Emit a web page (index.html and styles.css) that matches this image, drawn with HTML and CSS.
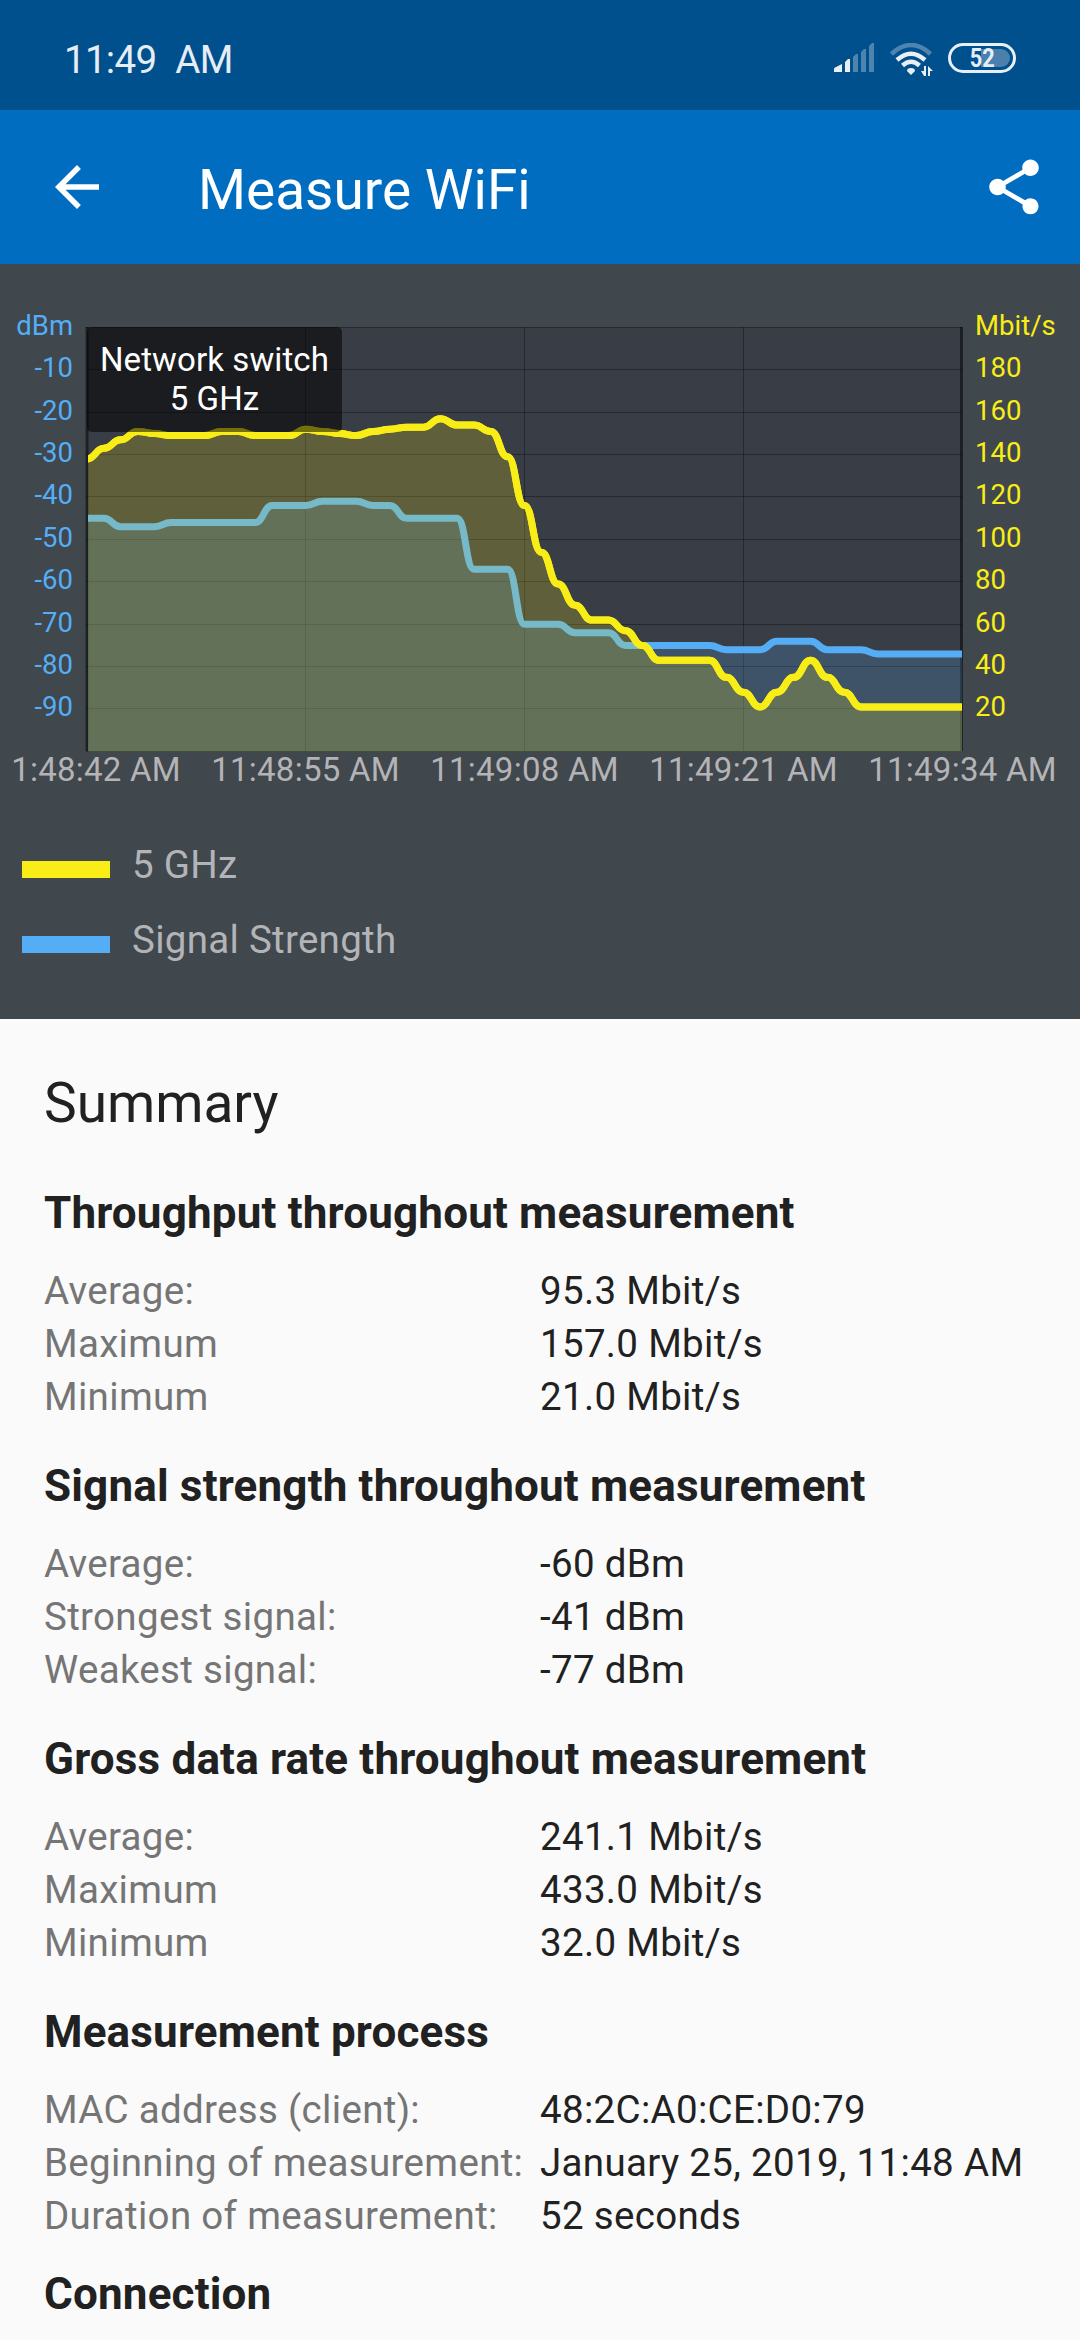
FILE: index.html
```
<!DOCTYPE html>
<html lang="en">
<head>
    <meta charset="UTF-8">
    <meta name="viewport" content="width=device-width, initial-scale=1.0">
    <title>Measure WiFi</title>
    <link rel="stylesheet" href="styles.css">
</head>
<body>
    <div class="status-bar">
        <span class="clock">11:49 AM</span>
        <div class="status-icons">
            <svg class="signal" viewBox="0 0 40 30" width="40" height="30">
                <path d="M0 29v-3q0-1 1-1.500L8 21v8z M11 29V19l3-3h2v13z"/>
                <path class="dim" d="M19 29V14l3-3h2v18z M27 29V9l3-3h2v23z M35 29V3l3-3h2v29z"/>
            </svg>
            <svg class="wifi" viewBox="0 0 44 34" width="44" height="34">
                <path class="arc dim-arc" d="M1.500 11Q21 -7 40.500 11"/>
                <path class="arc" d="M7 17Q21 4.500 35 17"/>
                <path class="arc" d="M12.500 22.500Q21 15 29.500 22.500"/>
                <path d="M17 28q0-3 4-3t4 3l-4 4z"/>
                <path d="M31 28h3v-5h2v10h-2zM38 23l5 5h-3v5h-2z"/>
            </svg>
            <div class="battery"><div class="battery-level"></div><span>52</span></div>
        </div>
    </div>

    <div class="app-bar">
        <svg viewBox="0 0 24 24" width="66" height="66">
            <path d="M20 11H7.830l5.590-5.590L12 4l-8 8 8 8 1.410-1.410L7.830 13H20v-2z"/>
        </svg>
        <h1>Measure WiFi</h1>
        <svg viewBox="0 0 24 24" width="66" height="66">
            <path d="M18 16.080c-.76 0-1.440.3-1.960.77L8.910 12.700c.05-.23.09-.46.09-.7s-.04-.47-.09-.7l7.050-4.110c.54.5 1.250.81 2.040.81 1.660 0 3-1.340 3-3s-1.340-3-3-3-3 1.340-3 3c0 .24.04.47.09.7L8.040 9.810C7.500 9.310 6.790 9 6 9c-1.660 0-3 1.340-3 3s1.340 3 3 3c.79 0 1.500-.31 2.040-.81l7.120 4.160c-.05.21-.08.43-.08.65 0 1.610 1.310 2.920 2.920 2.920s2.920-1.310 2.920-2.920-1.310-2.920-2.920-2.920z"/>
        </svg>
    </div>

    <div class="chart-panel">
        <svg id="chart" class="chart" viewBox="0 264 1080 540" width="1080" height="540"></svg>
        <div class="legend">
            <div class="legend-item"><i class="swatch yellow"></i>5 GHz</div>
            <div class="legend-item"><i class="swatch blue"></i>Signal Strength</div>
        </div>
    </div>

    <div class="summary">
        <h2>Summary</h2>

        <div class="section">
            <h3>Throughput throughout measurement</h3>
            <dl>
                <dt>Average:</dt><dd>95.3 Mbit/s</dd>
                <dt>Maximum</dt><dd>157.0 Mbit/s</dd>
                <dt>Minimum</dt><dd>21.0 Mbit/s</dd>
            </dl>
        </div>

        <div class="section">
            <h3>Signal strength throughout measurement</h3>
            <dl>
                <dt>Average:</dt><dd>-60 dBm</dd>
                <dt>Strongest signal:</dt><dd>-41 dBm</dd>
                <dt>Weakest signal:</dt><dd>-77 dBm</dd>
            </dl>
        </div>

        <div class="section">
            <h3>Gross data rate throughout measurement</h3>
            <dl>
                <dt>Average:</dt><dd>241.1 Mbit/s</dd>
                <dt>Maximum</dt><dd>433.0 Mbit/s</dd>
                <dt>Minimum</dt><dd>32.0 Mbit/s</dd>
            </dl>
        </div>

        <div class="section last">
            <h3>Measurement process</h3>
            <dl>
                <dt>MAC address (client):</dt><dd>48:2C:A0:CE:D0:79</dd>
                <dt>Beginning of measurement:</dt><dd>January 25, 2019, 11:48 AM</dd>
                <dt>Duration of measurement:</dt><dd>52 seconds</dd>
            </dl>
        </div>

        <h3>Connection</h3>
    </div>
    <script src="chart.js"></script>
</body>
</html>
```
FILE: styles.css
```
body {
    margin: 0;
    height: 2340px;
    overflow: hidden;
    font-family: Roboto, "Liberation Sans", sans-serif;
    font-size: 38.5px;
    color: #212121;
    background-color: #fafafa;
}
h1, h2, h3, dl, dd {
    margin: 0;
}

/* top bars */
.status-bar {
    display: flex;
    justify-content: space-between;
    box-sizing: border-box;
    height: 110px;
    padding: 0 64px;
    background-color: #00508e;
    color: #e6edf4;
}
.clock {
    margin-top: 37px;
    font-size: 38.5px;
    line-height: 46px;
    letter-spacing: -.7px;
    word-spacing: 10px;
}
.status-icons {
    display: flex;
    align-items: flex-start;
    padding-top: 43px;
}
.status-icons svg {
    fill: #e9eff5;
}
.wifi {
    margin: 0 14px 0 16px;
}
.status-icons .dim {
    fill: #4d84b0;
}
.wifi .arc {
    fill: none;
    stroke: #e9eff5;
    stroke-width: 4.5;
}
.wifi .dim-arc {
    stroke: #4d84b0;
}
.battery {
    position: relative;
    box-sizing: border-box;
    width: 68px;
    height: 30px;
    border: 3px solid #e9eff5;
    border-radius: 15px;
    font-size: 25px;
    font-weight: bold;
    line-height: 25px;
    text-align: center;
}
.battery span {
    position: relative;
    display: inline-block;
    transform: scaleX(.87);
}
.battery-level {
    position: absolute;
    top: 3px;
    right: 3px;
    width: 29px;
    height: 18px;
    border-radius: 0 9px 9px 0;
    background-color: #4a80ad;
}
.app-bar {
    display: flex;
    align-items: center;
    box-sizing: border-box;
    height: 154px;
    padding: 0 33px 0 44px;
    background-color: #006dc1;
    color: #fff;
}
.app-bar svg {
    fill: #fff;
}
.app-bar h1 {
    flex: 1;
    padding: 5px 0 0 88px;
    font-size: 55px;
    font-weight: normal;
}

/* chart */
.chart-panel {
    height: 755px;
    background-color: #40474d;
}
.chart {
    display: block;
}
.plot-bg { fill: #393d45; }
.grid { stroke: #000; stroke-opacity: .32; stroke-width: 1; }
.axis { stroke: #000; stroke-opacity: .5; stroke-width: 3; }
.line { fill: none; stroke-width: 7; stroke-linejoin: round; }
.line-blue { stroke: #55aef5; }
.line-yellow { stroke: #f8ed17; }
.fill-blue { fill: #55aef5; fill-opacity: .2; }
.fill-yellow { fill: #f8ed17; fill-opacity: .2; }
.label { font-size: 27.5px; }
.label-left { fill: #55aef5; text-anchor: end; }
.label-right { fill: #f8ed17; }
.label-time { font-size: 33px; letter-spacing: .25px; fill: #b4b3b6; text-anchor: middle; }
.marker { fill: #000; fill-opacity: .53; }
.marker-text { font-size: 33px; letter-spacing: .1px; fill: #fff; text-anchor: middle; }

.legend {
    padding-top: 23px;
}
.legend-item {
    display: flex;
    align-items: center;
    height: 75px;
    padding-left: 22px;
    letter-spacing: .28px;
    color: #b2b4b7;
}
.swatch {
    width: 88px;
    height: 17px;
    margin: 10px 22px 0 0;
}
.yellow { background-color: #f8ed17; }
.blue { background-color: #55aef5; }

/* summary */
.summary {
    padding: 51px 0 0 44px;
}
h2 {
    margin-bottom: 51px;
    font-size: 55px;
    font-weight: normal;
    line-height: 66px;
}
h3 {
    font-size: 44px;
    font-weight: bold;
    line-height: 52px;
    letter-spacing: .17px;
}
dl {
    display: grid;
    grid-template-columns: 496px 1fr;
    margin-top: 25px;
    line-height: 53px;
    letter-spacing: .32px;
    white-space: nowrap;
}
dt {
    color: #757575;
}
.section {
    margin-bottom: 37px;
}
.last {
    margin-bottom: 26px;
}
```
FILE: chart.js
```
// one sample per second
const throughput = [138, 143, 147, 151, 150, 149, 149, 149, 151, 151, 149, 149, 149, 152, 151, 150, 149,
    151, 152, 153, 153, 157, 154, 154, 151, 139, 116, 94, 79, 69, 62, 62, 57, 50, 43, 43, 43, 43,
    35, 28, 21, 28, 35, 43, 35, 28, 21, 21, 21, 21, 21, 21, 21];
const signal = [45, 45, 47, 47, 47, 46, 46, 46, 46, 46, 46, 42, 42, 42, 41, 41, 41, 42, 42, 45, 45, 45, 45,
    57, 57, 57, 70, 70, 70, 72, 72, 72, 75, 75, 75, 75, 75, 75, 76, 76, 76, 74, 74, 74, 76, 76, 76,
    77, 77, 77, 77, 77, 77];
const times = ['11:48:42 AM', '11:48:55 AM', '11:49:08 AM', '11:49:21 AM', '11:49:34 AM'];

const left = 87, right = 962, top_ = 327.5, bottom = 751.5;
const stepX = (right - left) / 52;
const rowH = (bottom - top_) / 10;

function curve(ys) {
    let d = `M${left} ${ys[0]}`;
    for (let i = 1; i < ys.length; i++) {
        const x = left + i * stepX, mid = x - stepX / 2;
        d += `C${mid} ${ys[i - 1]} ${mid} ${ys[i]} ${x} ${ys[i]}`;
    }
    return d;
}

function series(ys, color) {
    const d = curve(ys);
    return `<path class="line line-${color}" d="${d}"/>` +
        `<path class="fill-${color}" d="${d}V${bottom}H${left}Z"/>`;
}

let out = `<clipPath id="plot"><rect x="88" y="327" width="874" height="425"/></clipPath>`;
out += `<rect class="plot-bg" x="${left}" y="327" width="${right - left}" height="424"/>`;

for (let i = 0; i <= 10; i++) {
    const y = Math.floor(top_ + i * rowH - .2) + .5;
    out += `<line class="grid" x1="86" x2="${right}" y1="${y}" y2="${y}"/>`;
    if (i < 10) {
        out += `<text class="label label-left" x="73" y="${y + 7.500}">${i ? -i * 10 : 'dBm'}</text>`;
        out += `<text class="label label-right" x="975" y="${y + 7.500}">${i ? 200 - i * 20 : 'Mbit/s'}</text>`;
    }
}
times.forEach((t, i) => {
    const x = Math.floor(left + i * 13 * stepX) + .5;
    if (i > 0 && i < 4) out += `<line class="grid" x1="${x}" x2="${x}" y1="327" y2="751"/>`;
    // the first label is cut at the left edge
    out += i ? `<text class="label-time" x="${x}" y="781">${t}</text>`
             : `<text class="label-time" x="96" y="781">${t.slice(1)}</text>`;
});
out += `<line class="axis" x1="87" x2="87" y1="327" y2="751"/>`;
out += `<line class="axis" x1="961.5" x2="961.5" y1="327" y2="751"/>`;

out += '<g clip-path="url(#plot)">';
out += series(signal.map(v => top_ + v / 10 * rowH), 'blue');
// throughput line stays opaque above both areas
out += series(throughput.map(v => bottom - v / 20 * rowH), 'yellow');
out += `<path class="line line-yellow" d="${curve(throughput.map(v => bottom - v / 20 * rowH))}"/>`;
out += '</g>';

out += `<rect class="marker" x="87" y="327" width="255" height="105" rx="5"/>`;
out += `<text class="marker-text" x="214.500" y="371">Network switch</text>`;
out += `<text class="marker-text" x="214.500" y="410">5 GHz</text>`;

document.getElementById('chart').innerHTML = out;
```
